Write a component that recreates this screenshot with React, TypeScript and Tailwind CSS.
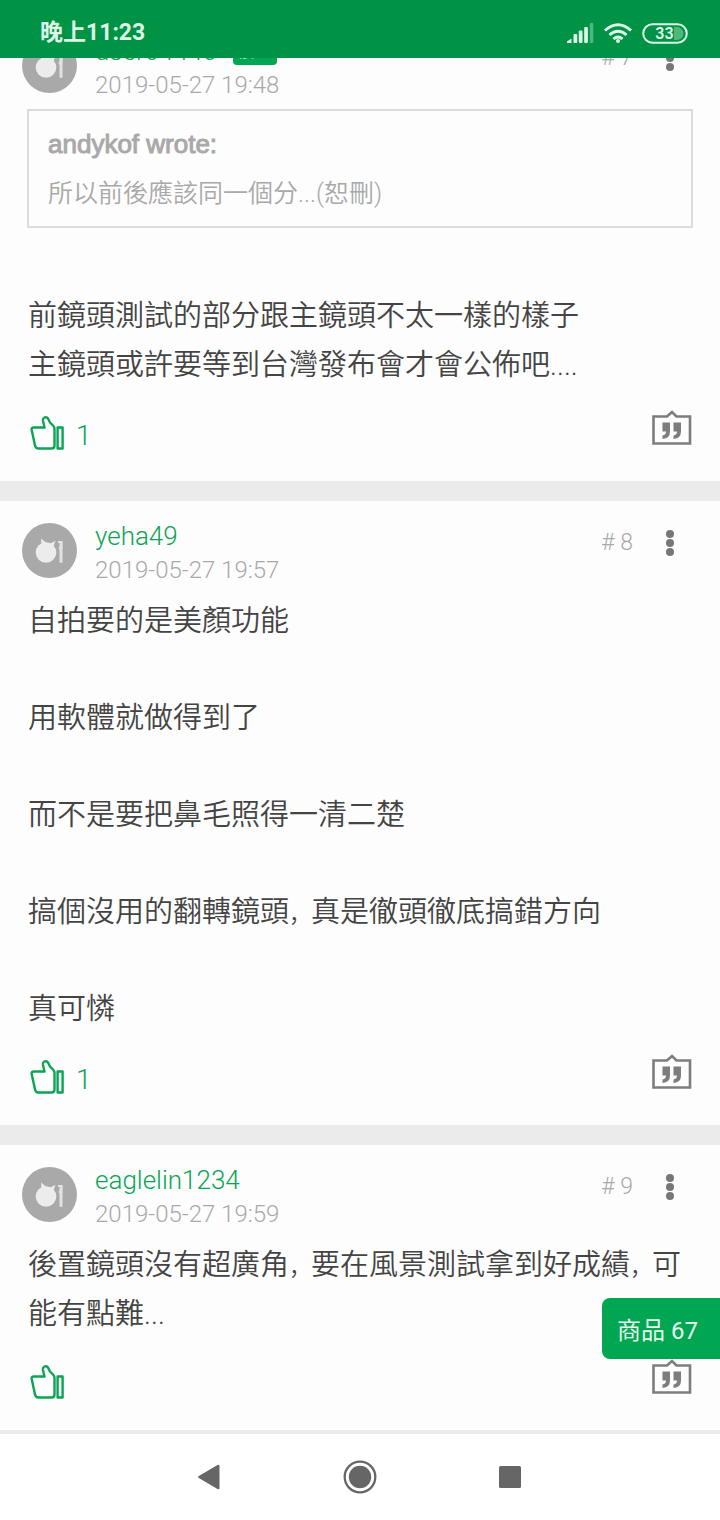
import type { ReactNode } from "react";

function Comma() {
  return <span className="text-[22px] leading-none">，</span>;
}

function Avatar() {
  return (
    <svg viewBox="0 0 55 55" className="size-[55px] shrink-0" aria-hidden="true">
      <circle cx="27.5" cy="27.5" r="27.5" fill="#a9a9a9" />
      <circle cx="24" cy="29.5" r="10.3" fill="#ececec" />
      <path d="M19 15.500l5.500 4.500-5 2zM33.500 18l-2 5-3.500-2.500z" fill="#ececec" />
      <path d="M36 18h4.700v7l-.2 2v12.700H37.500V27l-1-2 1-2v-3H36z" fill="#e2e2e2" />
    </svg>
  );
}

function ThumbIcon() {
  return (
    <svg viewBox="0 0 34 34" className="h-[34px] w-[34px]" fill="none" stroke="#0ba455" strokeWidth="2.400" strokeLinejoin="round" aria-hidden="true">
      <path d="M14.500 11.500H4q-2.800 0-2.300 2.500L5 29.500q.7 3 3.500 3h13q3 0 3-3V13q0-2-1.500-3.500L20 6.500l-2-4Q16.500.600 14.500 1.500q-2 1-1.500 3.500z" />
      <path d="M27.600 11.500h5v21h-5z" />
    </svg>
  );
}

function QuoteIcon() {
  return (
    <svg viewBox="0 0 40 36" className="h-9 w-10" aria-hidden="true">
      <path d="M1.500 6.500h13.500L20 2l4.500 4.500H38V33.500H1.500z" fill="none" stroke="#7d7d7d" strokeWidth="2.600" />
      <path d="M10.500 12.500h7.500v9q0 7-7.500 7.500v-3.500q3.500-.5 3.500-4h-3.500zM21.500 12.500h7.500v9q0 7-7.500 7.500v-3.500q3.500-.5 3.500-4h-3.500z" fill="#7d7d7d" />
    </svg>
  );
}

type PostProps = {
  name: string;
  time: string;
  floor: number;
  likes?: number;
  op?: boolean;
  quote?: ReactNode;
  paragraphs: ReactNode[];
};

function Post({ name, time, floor, likes, op, quote, paragraphs }: PostProps) {
  return (
    <article className="bg-[#fdfdfd]">
      <header className="flex h-24 items-start pl-[22px] pr-[38px] pt-[22px]">
        <Avatar />
        <div className="ml-[18px] flex-1">
          <div className="-mt-1 flex h-[34px] items-center gap-4">
            <a href="#profile" className="text-[26px] leading-[34px] text-[#0ba455]">{name}</a>
            {op && <span className="rounded bg-[#00a651] px-1 text-lg leading-[28px] text-white">樓主</span>}
          </div>
          <time className="block text-2xl leading-[34px] text-[#a9a9a9]">{time}</time>
        </div>
        <span className="mt-[5px] text-[23px] leading-[30px] text-[#a9a9a9]"># {floor}</span>
        <button type="button" aria-label="更多" className="ml-[25px] mt-1.5 flex w-6 justify-center">
          <svg viewBox="0 0 8 28" className="h-7 w-2" fill="#777" aria-hidden="true">
            <circle cx="4" cy="5" r="4" />
            <circle cx="4" cy="14" r="4" />
            <circle cx="4" cy="23" r="4" />
          </svg>
        </button>
      </header>
      {quote}
      <div className="flex flex-col gap-12 px-7 text-[29px] leading-[49px] text-[#444]">
        {paragraphs.map((p, i) => (
          <p key={i}>{p}</p>
        ))}
      </div>
      <footer className="flex h-[91px] items-start justify-between px-7 pt-5">
        <button type="button" aria-label="讚" className="mt-1.5 flex items-end gap-3 pl-0.5 text-[28px] leading-[28px] text-[#0ba455]">
          <ThumbIcon />
          {likes}
        </button>
        <button type="button" aria-label="引言">
          <QuoteIcon />
        </button>
      </footer>
    </article>
  );
}

export default function App() {
  return (
    <div className="flex min-h-screen flex-col bg-[#ebebeb] font-['Roboto','Noto_Sans_CJK_SC',sans-serif] font-[350]">
      <div className="relative z-10 flex h-[58px] items-center justify-between bg-[#009245] pl-10 pr-8 pt-2 text-[#dcf7e5]">
        <span className="text-[23px] font-bold">晚上11:23</span>
        <div className="flex items-center gap-2.5">
          <svg viewBox="0 0 28 20" className="h-5 w-7" fill="#dcfbe6" aria-hidden="true">
            <path d="M1 18.500l4.500-3v4.500H2q-1.500 0-1-1.500z" />
            <rect x="7.500" y="11" width="3.700" height="9" rx="1" />
            <rect x="12.800" y="7.500" width="3.700" height="12.500" rx="1" />
            <rect x="18.200" y="4" width="3.700" height="16" rx="1" />
            <rect x="23.800" y="0" width="3.500" height="20" rx="1" opacity=".35" />
          </svg>
          <svg viewBox="0 0 28 20" className="h-5 w-7" fill="none" stroke="#dcfbe6" strokeWidth="3" aria-hidden="true">
            <path d="M1 7.500q13-11.500 26 0M5.500 12q8.500-7.500 17 0M9.500 16q4.500-4 9 0" />
            <circle cx="14" cy="18" r="2" fill="#dcfbe6" stroke="none" />
          </svg>
          <svg viewBox="0 0 46 21" className="h-[21px] w-[46px]" aria-hidden="true">
            <rect x="1.200" y="1.200" width="43.600" height="18.600" rx="9.300" fill="none" stroke="#dcfbe6" strokeWidth="2" />
            <path d="M32 4h3a6.500 6.500 0 010 13h-3z" fill="#dcfbe6" opacity=".35" />
            <text x="22.500" y="16.200" fontSize="16" fontWeight="600" textAnchor="middle" fill="#dcfbe6" fontFamily="Roboto, sans-serif">33</text>
          </svg>
        </div>
      </div>

      <main className="-mt-[42px] flex flex-col gap-5">
        <Post
          name="user04446"
          op
          time="2019-05-27 19:48"
          floor={7}
          likes={1}
          quote={
            <blockquote className="mx-[27px] -mt-[3px] mb-16 h-[119px] border-2 border-[#dcdcdc] px-[19px] pt-[9px] text-[#a9a9a9]">
              <p className="font-['Liberation_Sans',sans-serif] text-[26px] font-normal leading-[49px] [-webkit-text-stroke:1px_#a9a9a9]">andykof wrote:</p>
              <p className="text-[25px] leading-[49px]">所以前後應該同一個分...(恕刪)</p>
            </blockquote>
          }
          paragraphs={[
            <>
              前鏡頭測試的部分跟主鏡頭不太一樣的樣子
              <br />
              主鏡頭或許要等到台灣發布會才會公佈吧....
            </>,
          ]}
        />
        <Post
          name="yeha49"
          time="2019-05-27 19:57"
          floor={8}
          likes={1}
          paragraphs={[
            "自拍要的是美顏功能",
            "用軟體就做得到了",
            "而不是要把鼻毛照得一清二楚",
            <>搞個沒用的翻轉鏡頭<Comma />真是徹頭徹底搞錯方向</>,
            "真可憐",
          ]}
        />
        <Post
          name="eaglelin1234"
          time="2019-05-27 19:59"
          floor={9}
          paragraphs={[
            <>後置鏡頭沒有超廣角<Comma />要在風景測試拿到好成績<Comma />可能有點難...</>,
          ]}
        />
      </main>

      <button type="button" className="fixed bottom-[161px] right-0 h-[61px] rounded-l-lg bg-[#00a651] pl-[15px] pr-[22px] pt-1 text-2xl font-normal text-[#e4fbee]">
        商品 67
      </button>

      <nav className="mt-1 flex h-[86px] items-center justify-center gap-[116px] bg-white">
        <button type="button" aria-label="返回" className="flex w-[34px] justify-center">
          <svg viewBox="0 0 24 26" className="h-[26px] w-6" fill="#666" aria-hidden="true">
            <path d="M.8 12L19.500 1q2-1 2 1v22q0 2-2 1L.8 14q-1.500-1 0-2z" />
          </svg>
        </button>
        <button type="button" aria-label="主畫面" className="flex w-[34px] justify-center">
          <svg viewBox="0 0 34 34" className="size-[34px]" aria-hidden="true">
            <circle cx="17" cy="17" r="15.300" fill="none" stroke="#666" strokeWidth="2.300" />
            <circle cx="17" cy="17" r="11.200" fill="#666" />
          </svg>
        </button>
        <button type="button" aria-label="最近" className="flex w-[34px] justify-center">
          <svg viewBox="0 0 22 22" className="size-[22px]" aria-hidden="true">
            <rect width="22" height="22" rx="1.500" fill="#666" />
          </svg>
        </button>
      </nav>
    </div>
  );
}
